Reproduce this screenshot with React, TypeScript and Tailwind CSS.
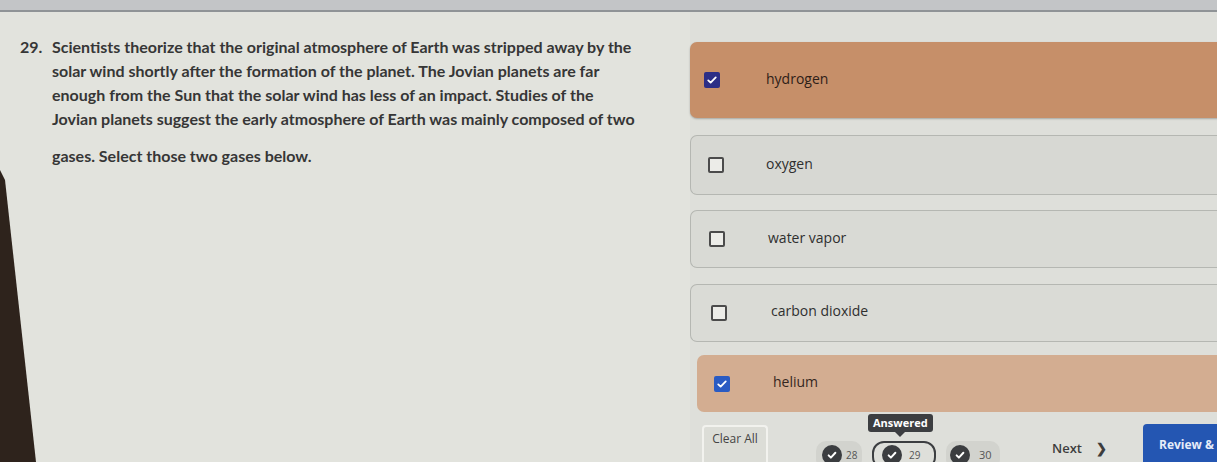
import React from "react";

const font = { fontFamily: '"Open Sans", "Liberation Sans", sans-serif' };
const qfont = { fontFamily: 'Lato, "Liberation Sans", sans-serif' };

function Check({ color }: { color: string }) {
  return (
    <span className={`flex h-[16px] w-[16px] items-center justify-center rounded-[2px] ${color}`}>
      <svg viewBox="0 0 16 16" className="h-[12px] w-[12px]" fill="none" stroke="white" strokeWidth="2.4" strokeLinecap="round" strokeLinejoin="round">
        <path d="M3 8.5l3.2 3L13 4.5" />
      </svg>
    </span>
  );
}

function Empty() {
  return <span className="block h-[16px] w-[16px] rounded-[2px] border-2 border-[#4b4b4b] bg-[#ecece8]" />;
}

function CircleCheck() {
  return (
    <span className="flex h-[20px] w-[20px] items-center justify-center rounded-full bg-[#3b3d40]">
      <svg viewBox="0 0 16 16" className="h-[12px] w-[12px]" fill="none" stroke="white" strokeWidth="2.6" strokeLinecap="round" strokeLinejoin="round">
        <path d="M3.5 8.5l3 3L12.5 5" />
      </svg>
    </span>
  );
}

export default function App() {
  const lines = [
    "solar wind shortly after the formation of the planet. The Jovian planets are far",
    "enough from the Sun that the solar wind has less of an impact. Studies of the",
    "Jovian planets suggest the early atmosphere of Earth was mainly composed of two",
  ];
  return (
    <div className="relative flex h-[462px] w-[1217px] flex-col overflow-hidden bg-[#dedfda]" style={font}>
      <div className="h-[12px] w-full shrink-0 border-b-2 border-[#8f9396] bg-[#c3c5c7]" />
      <div className="flex flex-1">
        {/* question */}
        <div className="w-[690px] shrink-0 bg-[#e2e3dd] pl-[20px] pt-[23px] text-[16px] font-bold text-[#363636]" style={qfont}>
          <div className="flex h-[24px] items-center">
            <span className="w-[32px]">29.</span>
            <span>Scientists theorize that the original atmosphere of Earth was stripped away by the</span>
          </div>
          {lines.map((l) => (
            <div key={l} className="flex h-[24px] items-center pl-[32px]">{l}</div>
          ))}
          <div className="mt-[13px] flex h-[24px] items-center pl-[32px]">gases. Select those two gases below.</div>
        </div>
        {/* options */}
        <div className="flex flex-1 flex-col pt-[30px]">
          <div className="-mr-[20px] flex h-[76px] items-center rounded-l-[7px] bg-[#c68f69] pl-[14px] shadow-[0_1px_2px_rgba(0,0,0,0.25)]">
            <Check color="bg-[#2c2e86]" />
            <span className="ml-[46px] -mt-[4px] text-[14px] text-[#2e2018]">hydrogen</span>
          </div>
          <div className="mt-[17px] -mr-[20px] flex h-[60px] items-center rounded-l-[7px] border border-r-0 border-[#b5b7b2] bg-[#d7d8d3] pl-[17px]">
            <Empty />
            <span className="ml-[42px] -mt-[4px] text-[14px] text-[#2f2f2f]">oxygen</span>
          </div>
          <div className="mt-[15px] -mr-[20px] flex h-[58px] items-center rounded-l-[7px] border border-r-0 border-[#b5b7b2] bg-[#d9dad5] pl-[18px]">
            <Empty />
            <span className="ml-[43px] -mt-[4px] text-[14px] text-[#2f2f2f]">water vapor</span>
          </div>
          <div className="mt-[16px] -mr-[20px] flex h-[58px] items-center rounded-l-[7px] border border-r-0 border-[#b5b7b2] bg-[#dadbd6] pl-[20px]">
            <Empty />
            <span className="ml-[44px] -mt-[6px] text-[14px] text-[#2f2f2f]">carbon dioxide</span>
          </div>
          <div className="mt-[13px] -mr-[20px] ml-[7px] flex h-[57px] items-center rounded-l-[7px] bg-[#d3ad91] pl-[17px]">
            <Check color="bg-[#2a5bc3]" />
            <span className="ml-[43px] -mt-[4px] text-[14px] text-[#35271f]">helium</span>
          </div>
          {/* footer */}
          <div className="relative flex flex-1 items-start">
            <div className="ml-[12px] mt-[13px] flex h-[40px] w-[66px] items-start justify-center rounded-t-[4px] border-2 border-b-0 border-[#f2f2ee] bg-[#dcddd7] pt-[3px] text-[12px] text-[#444]">
              Clear All
            </div>
            <div className="absolute left-[178px] top-[2px] flex flex-col items-center">
              <div className="rounded-[3px] bg-[#3c3e41] px-[5px] py-[2px] text-[11px] font-bold leading-[14px] text-white">Answered</div>
              <div className="h-0 w-0 border-x-[5px] border-t-[5px] border-x-transparent border-t-[#3c3e41]" />
            </div>
            <div className="ml-[48px] mt-[29px] flex items-center gap-[10px]">
              <div className="flex h-[28px] w-[46px] items-center gap-[4px] rounded-[10px] bg-[#d2d3ce] pl-[6px]">
                <CircleCheck />
                <span className="text-[10px] text-[#555]">28</span>
              </div>
              <div className="flex h-[28px] w-[64px] items-center gap-[7px] rounded-[12px] border-2 border-[#3c3e41] pl-[8px]">
                <CircleCheck />
                <span className="text-[10px] text-[#555]">29</span>
              </div>
              <div className="flex h-[28px] w-[54px] items-center gap-[9px] rounded-[10px] bg-[#d2d3ce] pl-[4px]">
                <CircleCheck />
                <span className="text-[11px] text-[#555]">30</span>
              </div>
            </div>
            <div className="ml-[52px] mt-[27px] flex items-center gap-[14px] text-[13px] font-semibold text-[#3d3d3d]">
              <span>Next</span>
              <span>❯</span>
            </div>
            <div className="ml-[36px] mt-[12px] flex h-[40px] flex-1 items-start rounded-tl-[4px] bg-[#2456b2] pl-[16px] pt-[12px] text-[12px] font-bold whitespace-nowrap text-[#e6ecf8]">
              Review &amp; Submit
            </div>
          </div>
        </div>
      </div>
      <svg className="pointer-events-none absolute left-0 top-0 h-[462px] w-[40px]" viewBox="0 0 40 462">
        <polygon points="0,170 5,180 36,462 0,462" fill="#2e231c" />
      </svg>
    </div>
  );
}
